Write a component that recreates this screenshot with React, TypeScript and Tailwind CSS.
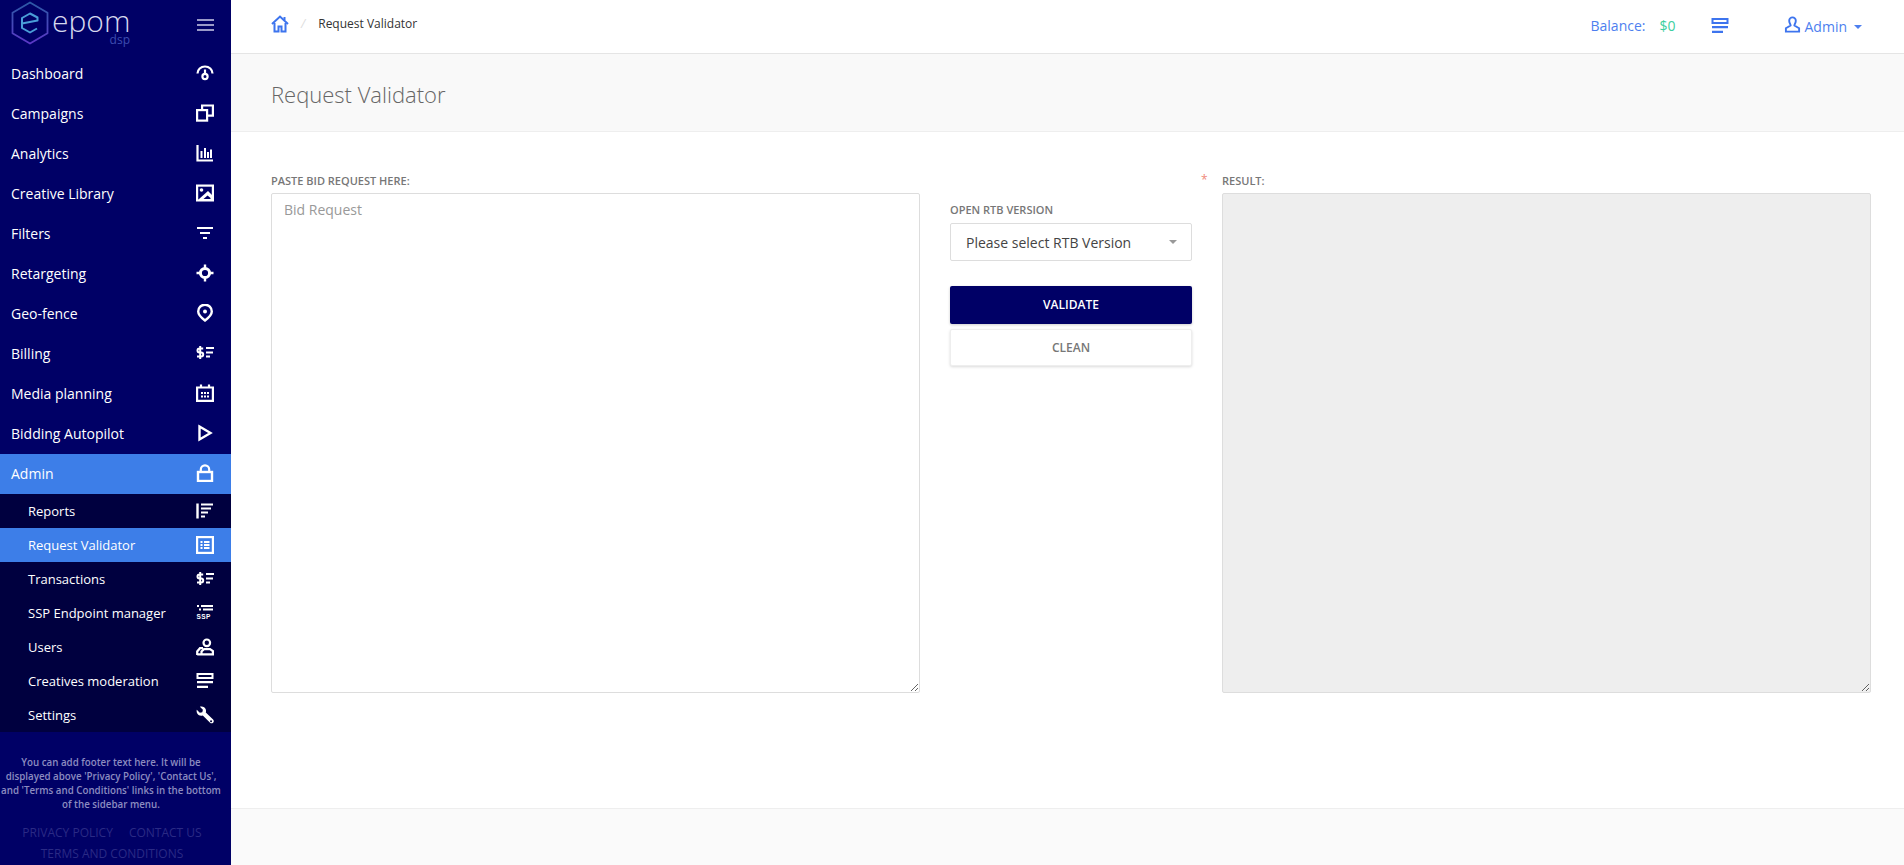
import React from 'react';

type IconProps = { className?: string };

const Svg: React.FC<{ className?: string; children: React.ReactNode }> = ({ className, children }) => (
  <svg viewBox="0 0 18 18" width="18" height="18" fill="none" stroke="currentColor" strokeWidth="2.200" className={className}>
    {children}
  </svg>
);

// --- Sidebar icons ---
const GaugeIcon = () => (
  <Svg>
    <path d="M1.500 9.500C1.500 5.500 4.800 2.500 9 2.500s7.500 3 7.500 7" />
    <path d="M9 5.500v4" />
    <circle cx="9" cy="12.500" r="2.600" />
  </Svg>
);
const CopyIcon = () => (
  <Svg>
    <rect x="1.100" y="6.100" width="10" height="10.500" />
    <path d="M6.100 6V1.500h10.800v10.200h-5.800" />
  </Svg>
);
const ChartIcon = () => (
  <Svg>
    <path d="M1.500 1v15.500H17" />
    <path d="M5.500 7v7M9 4v10M12 8v6M15 5.500V14" strokeWidth="2" />
  </Svg>
);
const ImageIcon = () => (
  <Svg>
    <rect x="1.100" y="1.600" width="15.800" height="14.800" />
    <circle cx="5.500" cy="6" r="1.800" fill="currentColor" stroke="none" />
    <path d="M3 15l9-8 4 4v5H3z" fill="currentColor" stroke="none" />
    <path d="M7.500 15l4-3.500 3 2.500v1z" fill="#000066" stroke="none" />
  </Svg>
);
const FilterIcon = () => (
  <Svg>
    <path d="M1 4h16M4 9h10M7 14h4" />
  </Svg>
);
const TargetIcon = () => (
  <Svg>
    <circle cx="9" cy="9" r="4.600" strokeWidth="3" />
    <path d="M9 .5v4M9 13.500v4M.5 9h4M13.500 9h4" strokeWidth="2.400" />
  </Svg>
);
const PinIcon = () => (
  <Svg>
    <path d="M9 16.500C5 13.500 2.200 11 2.200 7.500a6.800 6.800 0 0 1 13.600 0c0 3.500-2.800 6-6.800 9z" strokeWidth="2.400" />
    <circle cx="9" cy="7.500" r="2" fill="currentColor" stroke="none" />
  </Svg>
);
const BillingIcon = () => (
  <Svg>
    <path d="M7.200 4.500H3.500a1.900 1.900 0 0 0 0 4h1.700a1.900 1.900 0 0 1 0 4H1M4.200 2v13" strokeWidth="2" />
    <path d="M10 4h8M10 8.500h7M10 12.500h4" strokeWidth="2" />
  </Svg>
);
const CalendarIcon = () => (
  <Svg>
    <path d="M1.100 3.500h15.800v13.400H1.100z" />
    <path d="M5 .5v3M13 .5v3" />
    <path d="M5 9h2M8 9h2M11 9h2M5 12.500h2M8 12.500h2M11 12.500h2" strokeWidth="1.800" />
  </Svg>
);
const PlayIcon = () => (
  <Svg>
    <path d="M3.500 2.500 14.500 9 3.500 15.500z" strokeWidth="2.400" />
  </Svg>
);
const LockIcon = () => (
  <Svg>
    <rect x="2" y="8" width="14" height="9" strokeWidth="2.400" />
    <path d="M4.800 8V5.500a4.200 4.200 0 0 1 8.400 0V8" />
  </Svg>
);
const ReportsIcon = () => (
  <Svg>
    <path d="M1.500 1.500v15" strokeWidth="2.400" />
    <path d="M5 2.500h12M5 6.500h10M5 10.500h7M5 14.500h4" strokeWidth="2" />
  </Svg>
);
const TableIcon = () => (
  <Svg>
    <rect x="1.100" y="1.100" width="15.800" height="15.800" />
    <path d="M4.500 6h2M8 6h5.500M4.500 9h2M8 9h5.500M4.500 12h2M8 12h5.500" strokeWidth="1.800" />
  </Svg>
);
const SspIcon = () => (
  <svg viewBox="0 0 18 18" width="18" height="18" fill="currentColor">
    <rect x="1" y="1" width="2" height="2" />
    <rect x="5" y="1" width="12" height="2" />
    <rect x="3" y="4.500" width="2" height="2" />
    <rect x="7" y="4.500" width="10" height="2" />
    <text x="0.500" y="15" fontSize="6.500" fontWeight="700" fontFamily="'Liberation Sans', sans-serif" letterSpacing="0.400">SSP</text>
  </svg>
);
const UsersIcon = () => (
  <Svg>
    <circle cx="10.800" cy="4.800" r="3.300" />
    <path d="M1.200 17v-3.500L4 10.200h3" />
    <path d="M1.200 16.400H16.900v-3.200L14 11.200H8L5.500 13.500v2.900" />
  </Svg>
);
const ModerationIcon = ({ className }: IconProps) => (
  <Svg className={className}>
    <rect x="1.500" y="2" width="15" height="4" strokeWidth="2" />
    <path d="M1 10.200h16M1 14.800h11" />
  </Svg>
);
const WrenchIcon = () => (
  <svg viewBox="0 0 18 18" width="18" height="18" fill="currentColor">
    <path fillRule="evenodd" d="M.8 3.800 3.800 6.800 6.300 6.200 6.900 3.700 3.900.700C6.400-.2 9 1.100 9.800 3.500c.3 1 .3 2 0 2.900l7.300 7.200c.9.900.9 2.200 0 3.100-.9.800-2.200.8-3 0L6.800 9.400C4.300 10.200 1.800 9.100.9 6.700c-.3-1-.4-2-.1-2.900zM15 14.300a1 1 0 1 0 .1 2 1 1 0 0 0-.1-2z" />
  </svg>
);

const Logo = () => (
  <svg viewBox="0 0 40 44" width="40" height="44" fill="none">
    <defs>
      <linearGradient id="hexGrad" x1="0" y1="0" x2="0" y2="1">
        <stop offset="0" stopColor="#2c5aa6" />
        <stop offset="1" stopColor="#5c38c6" />
      </linearGradient>
    </defs>
    <path d="M20 1.500 37.500 11.800V32.200L20 42.500 2.500 32.200V11.800z" stroke="url(#hexGrad)" strokeWidth="1.800" strokeLinejoin="round" />
    <path d="M12 22.500 27.500 19.500V16.500L20 12.500 12 17V27L20 31.500 27 27.500" stroke="#4a9ed8" strokeWidth="2" strokeLinejoin="round" />
  </svg>
);

const menu = [
  { label: 'Dashboard', icon: <GaugeIcon /> },
  { label: 'Campaigns', icon: <CopyIcon /> },
  { label: 'Analytics', icon: <ChartIcon /> },
  { label: 'Creative Library', icon: <ImageIcon /> },
  { label: 'Filters', icon: <FilterIcon /> },
  { label: 'Retargeting', icon: <TargetIcon /> },
  { label: 'Geo-fence', icon: <PinIcon /> },
  { label: 'Billing', icon: <BillingIcon /> },
  { label: 'Media planning', icon: <CalendarIcon /> },
  { label: 'Bidding Autopilot', icon: <PlayIcon /> },
];

const subMenu = [
  { label: 'Reports', icon: <ReportsIcon /> },
  { label: 'Request Validator', icon: <TableIcon />, active: true },
  { label: 'Transactions', icon: <BillingIcon /> },
  { label: 'SSP Endpoint manager', icon: <SspIcon /> },
  { label: 'Users', icon: <UsersIcon /> },
  { label: 'Creatives moderation', icon: <ModerationIcon /> },
  { label: 'Settings', icon: <WrenchIcon /> },
];

const Sidebar = () => (
  <aside className="w-[231px] shrink-0 h-full bg-[#000066] text-white flex flex-col overflow-hidden">
    <div className="h-[54px] shrink-0 flex items-start justify-between pl-[10px] pr-[17px]">
      <div className="flex pt-[1px]">
        <Logo />
        <div className="ml-[2px] w-[78px] flex flex-col items-end pt-[9px]">
          <span className="self-start text-[30px] leading-[22px] font-extralight text-[#d6d8ee]">epom</span>
          <span className="mt-[2px] text-[12px] leading-[12px] text-[#3d4cb0]">dsp</span>
        </div>
      </div>
      <div className="flex flex-col gap-[3px] pt-[19px]">
        <span className="block w-[17px] h-[2px] bg-[#9a9ac8]" />
        <span className="block w-[17px] h-[2px] bg-[#9a9ac8]" />
        <span className="block w-[17px] h-[2px] bg-[#9a9ac8]" />
      </div>
    </div>

    <nav className="shrink-0">
      {menu.map((item) => (
        <div key={item.label} className="h-[40px] pb-[2px] flex items-center justify-between pl-[11px] pr-[17px] text-[14px]">
          <span>{item.label}</span>
          {item.icon}
        </div>
      ))}
      <div className="h-[40px] pb-[2px] flex items-center justify-between pl-[11px] pr-[17px] text-[14px] bg-[#3d7ee8]">
        <span>Admin</span>
        <LockIcon />
      </div>
      <div className="bg-[#00003f]">
        {subMenu.map((item) => (
          <div
            key={item.label}
            className={`h-[34px] flex items-center justify-between pl-[28px] pr-[17px] text-[13px] ${item.active ? 'bg-[#3d7ee8]' : ''}`}
          >
            <span className="translate-y-[1px]">{item.label}</span>
            {item.icon}
          </div>
        ))}
      </div>
    </nav>

    <div className="pt-[24px] pr-[9px] text-center text-[9.75px] leading-[14px] font-semibold whitespace-nowrap text-[#8c8cc0]">
      You can add footer text here. It will be<br />
      displayed above 'Privacy Policy', 'Contact Us',<br />
      and 'Terms and Conditions' links in the bottom<br />
      of the sidebar menu.
    </div>
    <div className="mt-[10px] pr-[7px] text-center text-[12px] leading-[21px] uppercase text-[#2a2a85]">
      <div>
        <span>Privacy Policy</span>
        <span className="ml-[16px]">Contact Us</span>
      </div>
      <div>Terms and Conditions</div>
    </div>
  </aside>
);

const Header = () => (
  <header className="h-[54px] shrink-0 bg-white border-b border-[#e5e5e5] flex items-center justify-between pl-[40px] pr-[42px]">
    <div className="flex items-center -mt-[6px]">
      <svg viewBox="0 0 18 18" width="18" height="18" fill="none" stroke="#3d74ee" strokeWidth="2">
        <path d="M1 9 9 1.500 17 9" />
        <path d="M3.500 8v8.500h4v-5h3v5h4V8" />
        <path d="M13.500 2v3" />
      </svg>
      <span className="ml-[12px] text-[#ddd] text-[12px] italic">/</span>
      <span className="ml-[13px] text-[12px] text-[#333]">Request Validator</span>
    </div>
    <div className="flex items-center -mt-[2px] text-[14px] text-[#4d7fef]">
      <span>Balance:</span>
      <span className="ml-[14px] text-[#3ccfa0]">$0</span>
      <ModerationIcon className="ml-[35px] text-[#3d74ee]" />
      <svg viewBox="0 0 18 18" width="17" height="17" fill="none" stroke="#3d74ee" strokeWidth="2" className="ml-[55px] -mt-[3px]">
        <path d="M9 1.500a3.500 3.500 0 0 0-3.500 3.500c0 2.500 1.500 3.500 1.500 5L2 13v3.500h14V13l-5-3c0-1.500 1.500-2.500 1.500-5A3.500 3.500 0 0 0 9 1.500z" />
      </svg>
      <span className="ml-[4px] translate-y-[1px]">Admin</span>
      <span className="ml-[7px] translate-y-[1px] w-0 h-0 border-x-[4px] border-x-transparent border-t-[4px] border-t-[#4d7fef]" />
    </div>
  </header>
);

const fieldLabel = 'block text-[11px] leading-[14px] font-semibold uppercase text-[#777]';

const App = () => (
  <div className="w-[1904px] h-[865px] flex overflow-hidden bg-white font-['Open_Sans',sans-serif]">
    <Sidebar />
    <main className="flex-1 flex flex-col min-w-0">
      <Header />
      <div className="h-[78px] shrink-0 bg-[#f9f9f9] border-b border-[#eeeeee] flex items-center pl-[40px] pt-[3px]">
        <h1 className="text-[22px] font-light text-[#666]">Request Validator</h1>
      </div>

      <div className="flex-1 flex pl-[40px] pr-[33px] pt-[41px]">
        <div className="w-[649px]">
          <label className={`${fieldLabel} mb-[6px] pt-[1px]`}>Paste bid request here:</label>
          <textarea
            placeholder="Bid Request"
            className="block w-full h-[500px] -mt-[1px] rounded-[2px] border border-[#ddd] px-[12px] py-[5px] text-[14px] text-[#555] placeholder:text-[#999] outline-none"
          />
        </div>

        <div className="w-[242px] ml-[30px] pt-[30px]">
          <label className={`${fieldLabel} mb-[6px]`}>Open RTB version</label>
          <div className="h-[38px] rounded-[2px] border border-[#ddd] flex items-center justify-between pl-[15px] pr-[14px] text-[14px] text-[#444]">
            <span>Please select RTB Version</span>
            <span className="w-0 h-0 border-x-[4px] border-x-transparent border-t-[4px] border-t-[#999]" />
          </div>
          <button className="mt-[25px] w-full h-[38px] rounded-[2px] bg-[#000066] text-white text-[12px] font-semibold uppercase shadow-[0_1px_3px_rgba(0,0,0,0.2)]">
            Validate
          </button>
          <button className="mt-[5px] w-full h-[37px] rounded-[2px] bg-white border border-[#eee] text-[#777] text-[12px] font-semibold uppercase shadow-[0_1px_3px_rgba(0,0,0,0.15)]">
            Clean
          </button>
        </div>

        <span className="ml-[9px] w-[21px] -mt-[3px] text-[12px] leading-[20px] text-[#f08a7a]">*</span>

        <div className="w-[649px]">
          <label className={`${fieldLabel} mb-[6px] pt-[1px]`}>Result:</label>
          <textarea
            disabled
            className="block w-full h-[500px] -mt-[1px] rounded-[2px] border border-[#ddd] bg-[#eeeeee] outline-none"
          />
        </div>
      </div>

      <footer className="h-[57px] shrink-0 bg-[#fafafa] border-t border-[#eeeeee]" />
    </main>
  </div>
);

export default App;
